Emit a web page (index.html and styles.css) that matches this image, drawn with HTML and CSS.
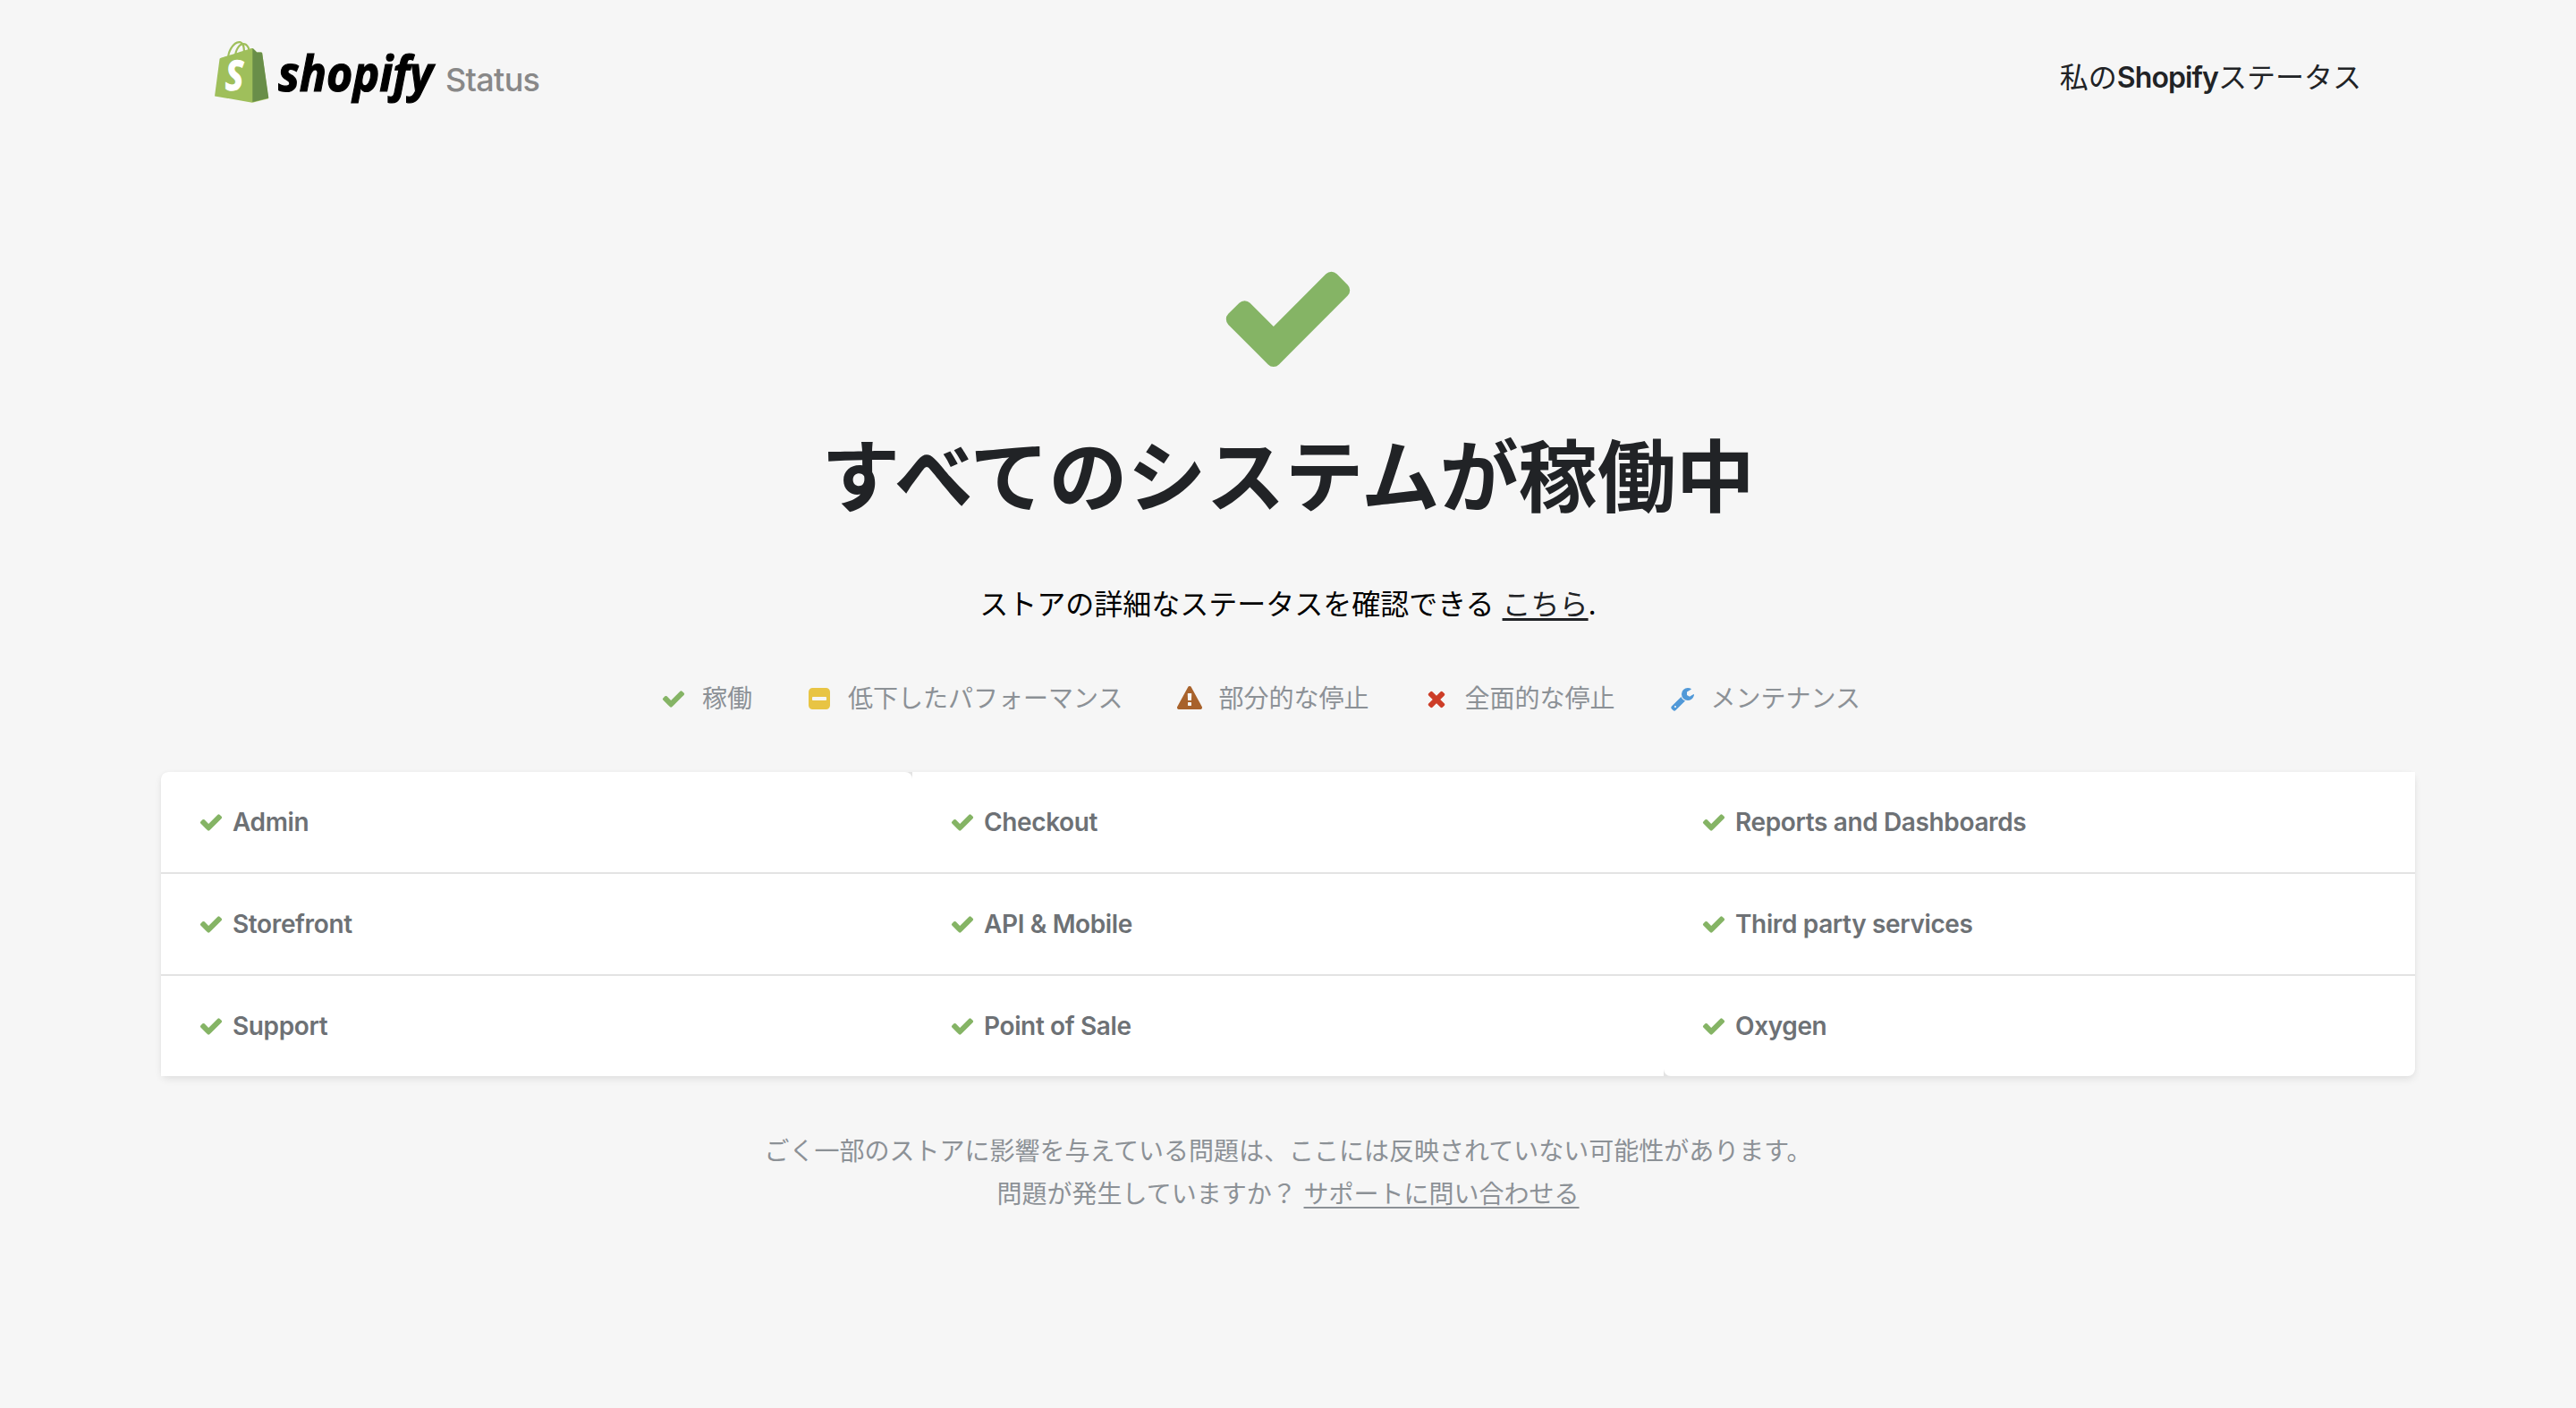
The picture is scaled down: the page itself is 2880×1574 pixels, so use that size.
FILE: index.html
```html
<!DOCTYPE html>
<html lang="ja">
<head>
  <meta charset="UTF-8">
  <meta name="viewport" content="width=device-width, initial-scale=1.0">
  <title>Shopify Status</title>
  <link rel="stylesheet" href="styles.css">
</head>
<body>

<!-- Icon shapes shared by the legend and the service list -->
<svg class="sprite" xmlns="http://www.w3.org/2000/svg">
  <symbol id="check" viewBox="0 0 1792 1792">
    <path d="M1671 566q0 40-28 68l-724 724-136 136q-28 28-68 28t-68-28l-136-136-362-362q-28-28-28-68t28-68l136-136q28-28 68-28t68 28l294 295 656-657q28-28 68-28t68 28l136 136q28 28 28 68z"/>
  </symbol>
  <symbol id="minus" viewBox="0 0 1792 1792">
    <path d="M1408 960v-128q0-26-19-45t-45-19h-896q-26 0-45 19t-19 45v128q0 26 19 45t45 19h896q26 0 45-19t19-45zm256-544v960q0 119-84.500 203.500t-203.500 84.500h-960q-119 0-203.500-84.500t-84.500-203.500v-960q0-119 84.500-203.500t203.500-84.500h960q119 0 203.500 84.500t84.500 203.500z"/>
  </symbol>
  <symbol id="warning" viewBox="0 0 1792 1792">
    <path d="M1024 1375v-190q0-14-9.500-23.500t-22.500-9.500h-192q-13 0-22.500 9.500t-9.500 23.500v190q0 14 9.500 23.500t22.500 9.500h192q13 0 22.500-9.500t9.500-23.500zm-2-374l18-459q0-12-10-19-13-11-24-11h-220q-11 0-24 11-10 7-10 21l17 457q0 10 10 16.500t24 6.500h185q14 0 23.500-6.500t10.500-16.500zm-14-934l768 1408q35 63-2 126-17 29-46.500 46t-63.500 17h-1536q-34 0-63.500-17t-46.500-46q-37-63-2-126l768-1408q17-31 47-49t65-18 65 18 47 49z"/>
  </symbol>
  <symbol id="times" viewBox="0 0 1792 1792">
    <path d="M1490 1322q0 40-28 68l-136 136q-28 28-68 28t-68-28l-294-294-294 294q-28 28-68 28t-68-28l-136-136q-28-28-28-68t28-68l294-294-294-294q-28-28-28-68t28-68l136-136q28-28 68-28t68 28l294 294 294-294q28-28 68-28t68 28l136 136q28 28 28 68t-28 68l-294 294 294 294q28 28 28 68z"/>
  </symbol>
  <symbol id="wrench" viewBox="0 0 1792 1792">
    <path d="M448 1472q0-26-19-45t-45-19-45 19-19 45 19 45 45 19 45-19 19-45zm644-420l-682 682q-37 37-90 37-52 0-91-37l-106-108q-38-36-38-90 0-53 38-91l681-681q39 98 114.500 173.500t173.500 114.500zm634-435q0 39-23 106-47 134-164.500 217.500t-258.500 83.500q-185 0-316.500-131.500t-131.500-316.500 131.500-316.500 316.500-131.500q58 0 121.500 16.500t107.500 46.500q16 11 16 28t-16 28l-293 169v224l193 107q5-3 79-48.500t135.500-81 70.500-35.500q15 0 23.500 10t8.500 25z"/>
  </symbol>
</svg>

<header class="header">
  <a class="logo" href="#">
    <svg class="logo-mark" viewBox="0 0 380 88" xmlns="http://www.w3.org/2000/svg">
      <g transform="translate(0 6) scale(.554)">
        <path fill="#9fbf5b" d="M95.900 23.900c-.1-.6-.6-1-1.100-1-.5 0-9.300-.2-9.300-.2s-7.400-7.200-8.100-7.900c-.7-.7-2.200-.5-2.700-.3 0 0-1.400.4-3.700 1.100-.4-1.300-1-2.800-1.800-4.400-2.600-5-6.500-7.700-11.100-7.700-.3 0-.6 0-1 .1-.1-.2-.3-.3-.4-.5-2-2.200-4.600-3.200-7.700-3.100-6 .2-12 4.500-16.800 12.200-3.400 5.400-6 12.200-6.700 17.500-6.900 2.100-11.700 3.600-11.800 3.700-3.500 1.100-3.600 1.200-4 4.500-.3 2.500-9.500 72.900-9.500 72.900l75.600 13.100 32.800-8.100S96 24.500 95.900 23.900zM67.200 16.800c-1.800.5-3.800 1.200-5.900 1.800 0-3-.4-7.300-1.800-10.900 4.500.9 6.800 6 7.700 9.100zM57.200 19.900c-4 1.200-8.400 2.600-12.800 3.900 1.200-4.700 3.600-9.400 6.400-12.500 1.100-1.100 2.600-2.400 4.300-3.200 1.800 3.500 2.200 8.400 2.100 11.800zM49.100 4c1.400 0 2.600.3 3.600.9-1.600.8-3.200 2.100-4.700 3.600-3.800 4.100-6.700 10.500-7.900 16.600-3.600 1.100-7.200 2.200-10.500 3.200C31.700 18.800 39.800 4.300 49.100 4z"/>
        <path fill="#698e49" d="M94.800 22.900c-.5 0-9.300-.2-9.300-.2s-7.400-7.200-8.100-7.900c-.3-.3-.6-.4-1-.5v108.600l32.800-8.100S96 24.600 95.900 23.900c-.1-.6-.6-1-1.100-1z"/>
      </g>
      <text class="bag-letter" x="12" y="61" textLength="20" lengthAdjust="spacingAndGlyphs">S</text>
      <text class="wordmark" x="71" y="62" textLength="173" lengthAdjust="spacingAndGlyphs">shopify</text>
      <text class="logo-status" x="258" y="62" textLength="106">Status</text>
    </svg>
  </a>
  <a class="my-status" href="#">私の<b>Shopify</b>ステータス</a>
</header>

<main class="main">
  <section class="hero">
    <svg class="hero-icon green"><use href="#check"/></svg>
    <h1 class="hero-title">すべてのシステムが稼働中</h1>
    <p class="hero-text">ストアの詳細なステータスを確認できる <a href="#">こちら</a>.</p>
  </section>

  <ul class="legend">
    <li><svg class="icon green"><use href="#check"/></svg>稼働</li>
    <li><svg class="icon yellow"><use href="#minus"/></svg>低下したパフォーマンス</li>
    <li><svg class="icon orange"><use href="#warning"/></svg>部分的な停止</li>
    <li><svg class="icon red"><use href="#times"/></svg>全面的な停止</li>
    <li><svg class="icon blue"><use href="#wrench"/></svg>メンテナンス</li>
  </ul>

  <div class="services">
    <div class="service"><svg class="icon green"><use href="#check"/></svg>Admin</div>
    <div class="service"><svg class="icon green"><use href="#check"/></svg>Checkout</div>
    <div class="service"><svg class="icon green"><use href="#check"/></svg>Reports and Dashboards</div>
    <div class="service"><svg class="icon green"><use href="#check"/></svg>Storefront</div>
    <div class="service"><svg class="icon green"><use href="#check"/></svg>API &amp; Mobile</div>
    <div class="service"><svg class="icon green"><use href="#check"/></svg>Third party services</div>
    <div class="service"><svg class="icon green"><use href="#check"/></svg>Support</div>
    <div class="service"><svg class="icon green"><use href="#check"/></svg>Point of Sale</div>
    <div class="service"><svg class="icon green"><use href="#check"/></svg>Oxygen</div>
  </div>

  <p class="note">
    ごく一部のストアに影響を与えている問題は、ここには反映されていない可能性があります。<br>
    問題が発生していますか？ <a href="#">サポートに問い合わせる</a>
  </p>
</main>

</body>
</html>
```
FILE: styles.css
```css
* {
  box-sizing: border-box;
}

body {
  margin: 0;
  min-height: 100vh;
  background-color: #f6f6f6;
  color: #212326;
  font-family: Inter, "Noto Sans CJK JP", sans-serif;
}

a {
  color: inherit;
}

.sprite {
  display: none;
}

.green { fill: #85b465; }
.yellow { fill: #e8c444; }
.orange { fill: #a8622b; }
.red { fill: #cd3d27; }
.blue { fill: #5199d8; }

.header {
  display: flex;
  justify-content: space-between;
  width: 2400px;
  height: 300px;
  margin: 0 auto;
  padding-top: 40px;
}

.logo-mark {
  display: block;
  width: 380px;
  height: 88px;
}

.bag-letter,
.wordmark {
  font-family: "Noto Sans", "Open Sans", sans-serif;
  font-style: italic;
  font-weight: 700;
}

.bag-letter {
  font-size: 46px;
  fill: #fff;
  stroke: #fff;
  stroke-width: 1.5px;
}

.wordmark {
  font-size: 55px;
  fill: #000;
  stroke: #000;
  stroke-width: 1.2px;
}

.logo-status {
  font-size: 36px;
  font-weight: 500;
  fill: #888;
}

.my-status {
  margin-top: 24px;
  height: 46px;
  line-height: 46px;
  font-size: 32px;
  text-decoration: none;
}

.my-status b {
  font-weight: 600;
  letter-spacing: -0.9px;
}

.main {
  width: 2520px;
  margin: 0 auto;
}

.hero {
  text-align: center;
}

.hero-icon {
  display: block;
  width: 160px;
  height: 160px;
  margin: -26px auto 0;
}

.hero-title {
  margin: 39px 0 0;
  font-size: 88px;
  line-height: 120px;
  font-weight: 700;
}

.hero-text {
  margin: 55px 0 0;
  color: #000;
  font-size: 32px;
  line-height: 56px;
}

.hero-text a {
  color: #212326;
  text-underline-offset: 4px;
}

.legend {
  display: flex;
  justify-content: center;
  margin: 52px 0 0;
  padding: 0;
  list-style: none;
  color: #8c9196;
  font-size: 28px;
  line-height: 50px;
}

.legend li {
  display: flex;
  align-items: center;
  margin-right: 61px;
}

.icon {
  width: 28px;
  height: 28px;
  flex: none;
}

.legend .icon {
  margin-right: 18px;
}

.services {
  display: grid;
  grid-template-columns: repeat(3, 1fr);
  row-gap: 2px;
  margin-top: 57px;
  border-radius: 8px;
  background-color: #e3e3e3;
  box-shadow: 0 4px 8px rgba(0, 0, 0, 0.08), 0 0 4px rgba(0, 0, 0, 0.03);
}

.service {
  display: flex;
  align-items: center;
  height: 112px;
  padding-left: 42px;
  background-color: #fff;
  color: #6d7175;
  font-size: 28px;
  font-weight: 600;
  letter-spacing: -0.37px;
}

.service .icon {
  margin-right: 10px;
}

.service:first-child {
  border-radius: 8px 8px 0 0;
}

.service:last-child {
  border-radius: 0 0 8px 8px;
}

.note {
  margin: 60px 0 0;
  color: #8c9196;
  font-size: 28px;
  line-height: 48px;
  text-align: center;
}

.note a {
  text-underline-offset: 4px;
}
```
